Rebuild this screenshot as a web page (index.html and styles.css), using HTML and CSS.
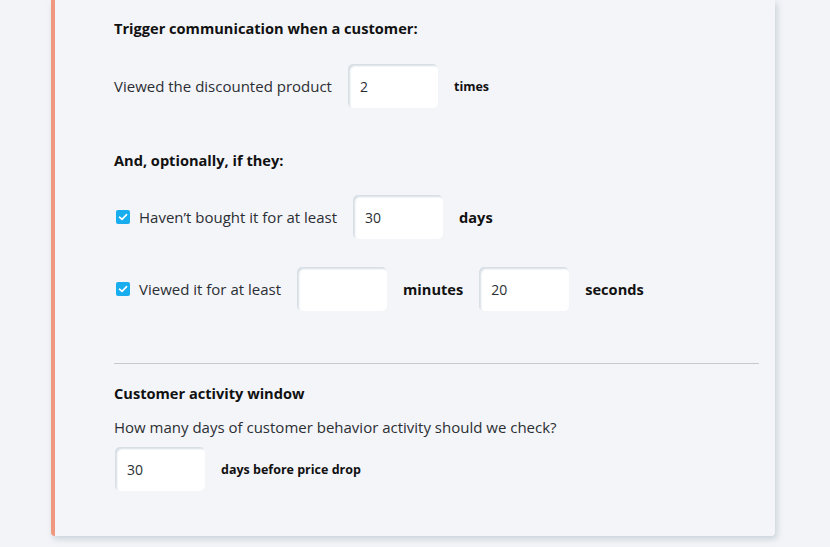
FILE: index.html
```html
<!DOCTYPE html>
<html>
<head>
  <meta charset="utf-8">
  <title>Trigger settings</title>
  <link rel="stylesheet" href="styles.css">
</head>
<body>
<div class="page">
  <div class="card">
    <h4 class="section-title">Trigger communication when a customer:</h4>
    <div class="row">
      <span class="label">Viewed the discounted product</span>
      <input type="text" class="field" value="2">
      <span class="unit unit-sm">times</span>
    </div>

    <h4 class="section-title optional">And, optionally, if they:</h4>
    <div class="row">
      <span class="check"><svg width="10" height="8" viewBox="0 0 10 8"><path d="M1.5 4.2 L4 6.4 L8.6 1.6" fill="none" stroke="#fff" stroke-width="1.6" stroke-linecap="round" stroke-linejoin="round"/></svg></span>
      <span class="label">Haven’t bought it for at least</span>
      <input type="text" class="field" value="30">
      <span class="unit">days</span>
    </div>
    <div class="row">
      <span class="check"><svg width="10" height="8" viewBox="0 0 10 8"><path d="M1.5 4.2 L4 6.4 L8.6 1.6" fill="none" stroke="#fff" stroke-width="1.6" stroke-linecap="round" stroke-linejoin="round"/></svg></span>
      <span class="label">Viewed it for at least</span>
      <input type="text" class="field" value="">
      <span class="unit">minutes</span>
      <input type="text" class="field" value="20">
      <span class="unit">seconds</span>
    </div>

    <hr class="divider">

    <h4 class="section-title window">Customer activity window</h4>
    <p class="help">How many days of customer behavior activity should we check?</p>
    <div class="row row-tight">
      <input type="text" class="field" value="30">
      <span class="unit unit-sm">days before price drop</span>
    </div>
  </div>
</div>
</body>
</html>
```

FILE: styles.css
```css
html, body {
  margin: 0;
  padding: 0;
}

body {
  background: #f3f4f7;
  font-family: "Open Sans", Lato, sans-serif;
  color: #1f2328;
  width: 830px;
  height: 547px;
  overflow: hidden;
}

.page {
  padding: 0 55px 12px 51px;
}

.card {
  background: #f4f5f9;
  border-left: 4px solid #f0977f;
  border-radius: 0 0 4px 4px;
  box-shadow: 2px 3px 6px rgba(150, 170, 185, 0.45);
  padding: 18px 16px 45px 59px;
}

.section-title {
  margin: 0;
  font-size: 14.6px;
  font-weight: 700;
  line-height: 20px;
  color: #111;
}

.optional {
  margin-top: 42px;
}

.row {
  display: flex;
  align-items: center;
  margin-top: 16px;
}

.row + .row {
  margin-top: 28px;
}

.section-title + .row {
  margin-top: 26px;
}

.optional + .row {
  margin-top: 25px;
}

.label {
  font-size: 15px;
  color: #2b2f33;
  margin-right: 16px;
}

.check {
  width: 14px;
  height: 14px;
  border-radius: 2px;
  background: #18adee;
  display: flex;
  align-items: center;
  justify-content: center;
  margin: 0 9px 0 2px;
}

.field {
  width: 90px;
  height: 44px;
  box-sizing: border-box;
  border: 0;
  border-radius: 5px;
  background: #fff;
  box-shadow: inset 2px 2px 2px #d6dee4;
  padding: 0 12px;
  font-family: inherit;
  font-size: 14px;
  color: #2b2f33;
  outline: none;
}

.unit {
  font-size: 14.6px;
  font-weight: 700;
  color: #111;
  margin: 0 16px;
}

.unit-sm {
  font-size: 12.5px;
}

.divider {
  border: 0;
  border-top: 1px solid #c6c9ce;
  margin: 52px 0 0 0;
}

.window {
  margin-top: 19px;
}

.help {
  margin: 14px 0 0 0;
  font-size: 15px;
  line-height: 20px;
  color: #2b2f33;
}

.row-tight {
  margin-top: 10px;
  padding-left: 1px;
}
```
